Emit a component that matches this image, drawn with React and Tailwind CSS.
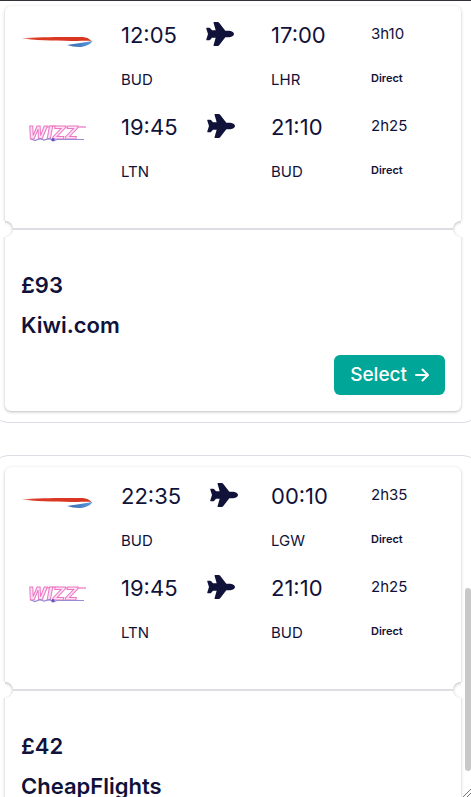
const trips = [
  {
    price: "£93",
    seller: "Kiwi.com",
    legs: [
      { airline: "British Airways", depart: "12:05", from: "BUD", arrive: "17:00", to: "LHR", duration: "3h10" },
      { airline: "Wizz", depart: "19:45", from: "LTN", arrive: "21:10", to: "BUD", duration: "2h25" },
    ],
  },
  {
    price: "£42",
    seller: "CheapFlights",
    legs: [
      { airline: "British Airways", depart: "22:35", from: "BUD", arrive: "00:10", to: "LGW", duration: "2h35" },
      { airline: "Wizz", depart: "19:45", from: "LTN", arrive: "21:10", to: "BUD", duration: "2h25" },
    ],
  },
];

function BritishAirwaysLogo() {
  return (
    <svg viewBox="0 0 72 36" className="h-9 w-[72px]" role="img" aria-label="British Airways">
      <defs>
        <linearGradient id="ba-red" x1="0" x2="1">
          <stop offset="0" stopColor="#e0402c" stopOpacity="0.3" />
          <stop offset="0.15" stopColor="#dd3a25" />
          <stop offset="1" stopColor="#d83520" />
        </linearGradient>
        <linearGradient id="ba-blue" x1="0" x2="1">
          <stop offset="0" stopColor="#3565a8" />
          <stop offset="1" stopColor="#5a9be0" />
        </linearGradient>
      </defs>
      <path d="M0 16.3 C18 14.8 42 14.9 60 15 C66 15.1 69 17 70.5 19.3 C67 18.4 62 18.9 56 18.9 C36 19 14 18.6 0 16.3Z" fill="url(#ba-red)" />
      <path d="M46 23 C55 21.6 64 20.6 71.5 19 C69.5 22.5 64 25 58 25 C54 25 50 24 46 23Z" fill="url(#ba-blue)" />
    </svg>
  );
}

function WizzLogo() {
  return (
    <svg viewBox="0 0 72 36" className="h-9 w-[72px]" role="img" aria-label="Wizz">
      <g className="blur-[0.6px]">
        <path d="M26 13 L33 12 L38 13 H65" fill="none" stroke="#f08fce" strokeWidth="1.3" />
        <text x="7" y="25" fontFamily="DejaVu Sans, sans-serif" fontSize="17" fontWeight="700" fontStyle="italic" fill="#fce0f2" stroke="#ec78c4" strokeWidth="1">
          WIZZ
        </text>
        <path d="M10 25 L14 26.5 L19 24.5 L23 26 L29 24.5 L32 27 L36 25.5 H63" fill="none" stroke="#9a8cd4" strokeWidth="1.2" />
        <circle cx="32" cy="25.5" r="1.6" fill="#5a55bc" />
      </g>
    </svg>
  );
}

function Plane() {
  return (
    <svg viewBox="0 0 84 72" className="h-6 w-7 shrink-0" fill="#11123a" aria-hidden="true">
      <path d="M24 0 H35 Q38 0 40 3 L58 26 H70 Q84 29 84 36 Q84 43 70 46 H58 L40 69 Q38 72 35 72 H24 Q22 72 23 68 L29 47 H18 L12 54 Q11 55 9 55 H2 Q0 55 1 52 L6 36 L1 20 Q0 17 2 17 H9 Q11 17 12 18 L18 25 H29 L23 4 Q22 0 24 0Z" />
    </svg>
  );
}

function Leg({ leg }) {
  return (
    <li className="grid grid-cols-[100px_150px_100px_1fr] pb-6">
      <div>{leg.airline === "Wizz" ? <WizzLogo /> : <BritishAirwaysLogo />}</div>
      <div className="flex flex-col gap-[22px]">
        <div className="flex items-start gap-[29px]">
          <time className="text-[22px] leading-[26px]">{leg.depart}</time>
          <Plane />
        </div>
        <span className="text-[15px] leading-5">{leg.from}</span>
      </div>
      <div className="flex flex-col gap-[22px]">
        <time className="text-[22px] leading-[26px]">{leg.arrive}</time>
        <span className="text-[15px] leading-5">{leg.to}</span>
      </div>
      <div className="flex flex-col gap-5">
        <span className="text-[15px] leading-6">{leg.duration}</span>
        <span className="text-[11px] leading-6 font-semibold">Direct</span>
      </div>
    </li>
  );
}

function Perforation() {
  return (
    <div className="-mx-1 flex h-4 items-center bg-white px-1">
      <div className="h-4 w-2 overflow-hidden">
        <div className="-ml-2 size-4 rounded-full shadow-[inset_0_1px_3px_rgba(37,32,31,0.3)]" />
      </div>
      <div className="h-[2px] flex-1 bg-[#dddde5]" />
      <div className="h-4 w-2 overflow-hidden">
        <div className="size-4 rounded-full shadow-[inset_0_1px_3px_rgba(37,32,31,0.3)]" />
      </div>
    </div>
  );
}

function Ticket({ trip }) {
  return (
    <section className="-mx-2 rounded-2xl border border-[#dddde5] py-[11px] pr-[17px] pl-3">
      <article className="rounded-md bg-white shadow-[0_1px_3px_rgba(37,32,31,0.3)]">
        <ul className="px-4 pt-4 pb-[15px]">
          {trip.legs.map((leg) => (
            <Leg key={leg.airline} leg={leg} />
          ))}
        </ul>
        <Perforation />
        <div className="flex flex-col px-4 pt-[34px] pb-4">
          <strong className="text-[22px] leading-7 font-semibold">{trip.price}</strong>
          <h2 className="mt-3 text-[22px] leading-7 font-semibold">{trip.seller}</h2>
          <button type="button" className="mt-4 flex h-10 items-center gap-2 self-end rounded-md bg-[#00a698] px-4 text-[19px] font-medium text-white">
            Select
            <svg viewBox="0 0 14 14" className="size-[14px]" fill="none" stroke="currentColor" strokeWidth="2" strokeLinecap="round" strokeLinejoin="round" aria-hidden="true">
              <path d="M1 7 H12.5 M7.5 1.5 L13 7 L7.5 12.5" />
            </svg>
          </button>
        </div>
      </article>
    </section>
  );
}

export default function App() {
  return (
    <main className="relative h-screen overflow-hidden border-t border-[#333238] bg-white font-['Inter',sans-serif] text-[#11123a]">
      <div className="-mt-[7px] flex flex-col gap-8">
        {trips.map((trip) => (
          <Ticket key={trip.seller} trip={trip} />
        ))}
      </div>
      <div className="absolute right-0 bottom-[26px] h-[183px] w-1.5 rounded-full bg-[#c8c8c8]" />
      <svg viewBox="0 0 9 9" className="absolute right-0 bottom-0 size-[9px]" stroke="#777" aria-hidden="true">
        <path d="M1 9 L9 1 M5 9 L9 5" />
      </svg>
    </main>
  );
}
